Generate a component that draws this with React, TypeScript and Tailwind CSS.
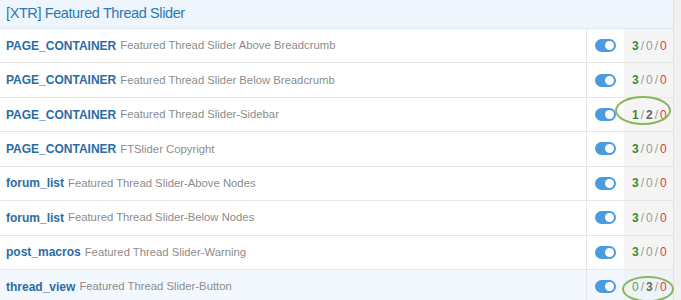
const ROWS = [
  { hook: "PAGE_CONTAINER", desc: "Featured Thread Slider Above Breadcrumb", stats: [3, 0, 0] },
  { hook: "PAGE_CONTAINER", desc: "Featured Thread Slider Below Breadcrumb", stats: [3, 0, 0] },
  { hook: "PAGE_CONTAINER", desc: "Featured Thread Slider-Sidebar", stats: [1, 2, 0], circle: "-left-[17px] -right-[4px] -top-[12px] -bottom-[3px]" },
  { hook: "PAGE_CONTAINER", desc: "FTSlider Copyright", stats: [3, 0, 0] },
  { hook: "forum_list", desc: "Featured Thread Slider-Above Nodes", stats: [3, 0, 0] },
  { hook: "forum_list", desc: "Featured Thread Slider-Below Nodes", stats: [3, 0, 0] },
  { hook: "post_macros", desc: "Featured Thread Slider-Warning", stats: [3, 0, 0] },
  { hook: "thread_view", desc: "Featured Thread Slider-Button", stats: [0, 3, 0], circle: "-left-[10px] -right-[7px] -top-[4px] -bottom-[8px]", hover: true },
]

const Toggle = () => (
  <span className="relative inline-block h-[13px] w-[21px] rounded-full bg-[#4a9be0]">
    <span className="absolute right-[2px] top-[2px] h-[9px] w-[9px] rounded-full bg-white" />
  </span>
)

const Stats = ({ values, circle }: { values: number[]; circle?: string }) => {
  const [a, b, c] = values
  return (
    <div className="relative flex items-center gap-[2px] text-[12px] leading-[14px]">
      <span className={a > 0 ? "font-bold text-[#3d8b2c]" : "text-[#6a9a5a]"}>{a}</span>
      <span className="text-[#9a9a9a]">/</span>
      <span className={b > 0 ? "font-bold text-[#666666]" : "text-[#9a9a9a]"}>{b}</span>
      <span className="text-[#9a9a9a]">/</span>
      <span className="text-[#e0393e]">{c}</span>
      {circle && (
        <span className={`pointer-events-none absolute rounded-[50%] border-2 border-[#8ab55a] ${circle}`} />
      )}
    </div>
  )
}

export default function App() {
  return (
    <div
      className="flex h-[300px] w-[681px] overflow-hidden bg-[#f1f1f1]"
      style={{ fontFamily: '"Liberation Sans", Arial, sans-serif' }}
    >
      <div className="flex w-[674px] flex-col border-r border-[#e2e2e2] bg-white">
        <div className="flex h-[29px] shrink-0 items-center border-b border-[#dfe7ef] bg-[#eef5fd] px-[6px] text-[14.5px] tracking-[-0.4px] text-[#2a79b4]">
          [XTR] Featured Thread Slider
        </div>
        {ROWS.map((row, i) => (
          <div
            key={i}
            className={`flex h-[34.43px] shrink-0 border-b border-[#e6e6e6] ${row.hover ? "bg-[#f2f8fd]" : "bg-white"}`}
          >
            <div className="flex flex-1 items-center gap-[4px] px-[6px]">
              <span className="text-[12px] font-bold text-[#2b6ca5]">{row.hook}</span>
              <span className="text-[11.3px] text-[#8c8c8c]">{row.desc}</span>
            </div>
            <div className="flex w-[38px] items-center justify-center border-l border-[#e6e6e6]">
              <Toggle />
            </div>
            <div className={`flex w-[49px] items-center pl-[8px] ${row.hover ? "bg-[#eef3f7]" : "bg-[#f5f5f5]"}`}>
              <Stats values={row.stats} circle={row.circle} />
            </div>
          </div>
        ))}
      </div>
    </div>
  )
}
